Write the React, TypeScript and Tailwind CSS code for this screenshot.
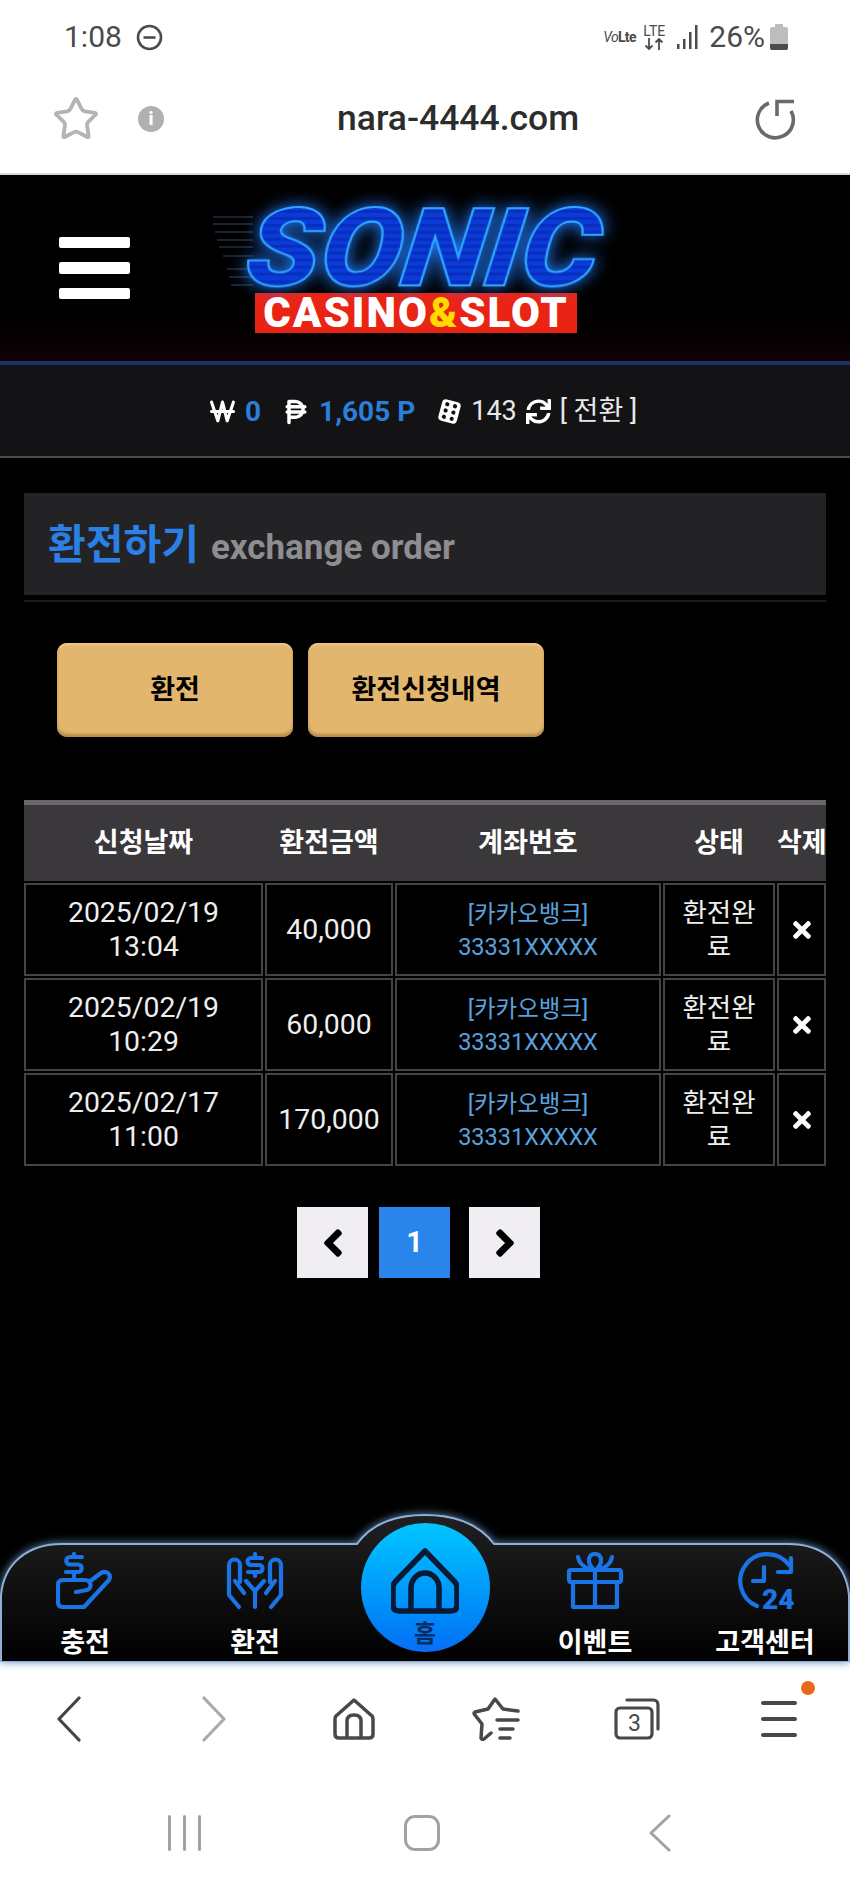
import React from "react";
import { Star } from "lucide-react";
import { FaTimes, FaAngleLeft, FaAngleRight, FaSync } from "react-icons/fa";
import { FaWonSign, FaPesoSign } from "react-icons/fa6";

const rows = [
  { date: "2025/02/19", time: "13:04", amount: "40,000" },
  { date: "2025/02/19", time: "10:29", amount: "60,000" },
  { date: "2025/02/17", time: "11:00", amount: "170,000" },
];

const tableCols = "grid grid-cols-[239px_128px_266px_112px_49px] gap-x-[2px]";
const cell = "flex items-center justify-center text-center border-2 border-[#444345] bg-black";

const StatusBar = () => (
  <div className="h-[74px] flex items-center justify-between pl-[64px] pr-[62px] text-[#4b4b4b]">
    <div className="flex items-center gap-[14px]">
      <span className="text-[30px] leading-none">1:08</span>
      <svg width="27" height="27" viewBox="0 0 27 27" fill="none" stroke="#4b4b4b" strokeWidth="2.6">
        <circle cx="13.5" cy="13.5" r="11.5" />
        <path d="M7.5 13.5h12" />
      </svg>
    </div>
    <div className="flex items-center">
      <span className="text-[14px] font-bold leading-none w-[32px] mr-[6px] tracking-tighter whitespace-nowrap">
        <i className="font-normal">Vo</i>Lte
      </span>
      <div className="flex flex-col items-center w-[26px] mr-[10px]">
        <span className="text-[14px] leading-[14px]">LTE</span>
        <svg width="20" height="12" viewBox="0 0 20 12" fill="none" stroke="#4b4b4b" strokeWidth="1.8">
          <path d="M5 0v11M1.5 7.5 5 11l3.5-3.5M15 12V1M11.5 4.500 15 1l3.500 3.500" />
        </svg>
      </div>
      <svg width="22" height="24" viewBox="0 0 22 24" fill="#4b4b4b" className="mr-[10px]">
        <rect x="0" y="19" width="2.500" height="5" />
        <rect x="6" y="14" width="2.500" height="10" />
        <rect x="12" y="7" width="2.500" height="17" />
        <rect x="18" y="0" width="2.500" height="24" />
      </svg>
      <span className="text-[30px] leading-none mr-[5px]">26%</span>
      <svg width="18" height="26" viewBox="0 0 18 26">
        <rect x="5" y="0" width="8" height="3" fill="#bdbdbd" />
        <rect x="0" y="3" width="18" height="23" rx="2" fill="#bdbdbd" />
        <path d="M0 20h18v4a2 2 0 0 1-2 2H2a2 2 0 0 1-2-2z" fill="#4b4b4b" />
      </svg>
    </div>
  </div>
);

const AddressBar = () => (
  <div className="h-[101px] grid grid-cols-[337px_auto_1fr] items-center border-b-2 border-[#d8d8d8] pb-[10px]">
    <div className="flex items-center pl-[52px] gap-[38px]">
      <Star size={48} strokeWidth={1.9} className="text-[#b4b4b4]" />
      <div className="w-[26px] h-[26px] rounded-full bg-[#b0b0b0] flex items-center justify-center text-white text-[18px] font-black leading-none">
        i
      </div>
    </div>
    <span className="text-[35.5px] font-medium text-[#2c2c2c] leading-none">nara-4444.com</span>
    <div className="flex justify-end pr-[53px]">
      <svg width="44" height="42" viewBox="0 0 44 42" fill="none" stroke="#6a6a6a" strokeWidth="3.600">
        <path d="M16 5A18 18 0 1 0 38 13" />
        <path d="M24 18V3.500H41" />
      </svg>
    </div>
  </div>
);

const SpeedLines = () => (
  <svg width="50" height="76" viewBox="0 0 50 76" stroke="#36445f" strokeWidth="1" className="absolute left-[-31px] top-[9px]">
    <path d="M0 2H40M0 9H40M2 17H40M4 25H40M6 32H40M10 41H40M14 54H40M16 62H40M18 70H40" />
  </svg>
);

const Logo = () => (
  <div className="relative w-[360px] flex flex-col items-center">
    <SpeedLines />
    <span className="scale-x-[1.13] -skew-x-[6deg] text-[108px] leading-[84px] font-black italic text-transparent bg-clip-text bg-[repeating-linear-gradient(180deg,#0a3ad8_0px,#0a3ad8_4px,#082fbc_4px,#082fbc_7px)] [-webkit-text-stroke:2px_#2fa8ff] [filter:drop-shadow(0_0_8px_#1f7bff)]">
      SONIC
    </span>
    <div className="mt-[3px] ml-[-16px] w-[322px] h-[40px] bg-[#ea2415] flex items-center justify-center text-[42px] leading-none font-black text-white tracking-[2px]">
      CASINO<span className="text-[#ffdc00]">&amp;</span>SLOT
    </div>
  </div>
);

const Header = () => (
  <div className="h-[190px] flex items-center pl-[59px] border-b-4 border-[#1c2f6e] bg-gradient-to-b from-black from-60% to-[#120205]">
    <div className="flex flex-col gap-[14px] w-[71px]">
      <div className="h-[11px] rounded-[2px] bg-white" />
      <div className="h-[12px] rounded-[2px] bg-white" />
      <div className="h-[11px] rounded-[2px] bg-white" />
    </div>
    <div className="ml-[114px] mt-[2px]">
      <Logo />
    </div>
  </div>
);

const DiceIcon = () => (
  <svg width="25" height="25" viewBox="0 0 25 25" className="mr-[9px]">
    <g transform="rotate(15 12.500 12.500)">
      <rect x="3" y="1.500" width="19" height="22" rx="4" fill="#fff" />
      <g fill="#131316">
        <circle cx="8.500" cy="6" r="2.100" />
        <circle cx="16.500" cy="6" r="2.100" />
        <circle cx="8.500" cy="12.500" r="2.100" />
        <circle cx="16.500" cy="12.500" r="2.100" />
        <circle cx="8.500" cy="19" r="2.100" />
        <circle cx="16.500" cy="19" r="2.100" />
      </g>
    </g>
  </svg>
);

const BalanceBar = () => (
  <div className="h-[93px] pt-[2px] pl-[210px] flex items-center bg-[#131316] border-b-2 border-[#4d4d4f] text-[27px] leading-none text-[#e8e8e8]">
    <FaWonSign size={25} className="text-white" />
    <span className="ml-[10px] mr-[21px] text-[28px] font-bold text-[#2a7fd8]">0</span>
    <FaPesoSign size={28} className="text-white" />
    <span className="ml-[9px] mr-[22px] text-[28px] font-bold text-[#2a7fd8]">1,605 P</span>
    <DiceIcon />
    <span>143</span>
    <FaSync size={25} className="mx-[9px] text-white" />
    <span>[ 전환 ]</span>
  </div>
);

const ExchangeButton = ({ label }: { label: string }) => (
  <button className="w-[236px] h-[94px] rounded-[10px] bg-[#e3b66e] shadow-[inset_0_-3px_3px_#b58a4a,inset_0_2px_2px_#eec98a] text-[27px] font-bold text-black">
    {label}
  </button>
);

const WithdrawTable = () => (
  <div>
    <div className={`${tableCols} h-[81px] items-center bg-[#3a383b] border-t-[5px] border-[#6a686b] text-[27px] font-bold text-white text-center`}>
      <span>신청날짜</span>
      <span>환전금액</span>
      <span>계좌번호</span>
      <span>상태</span>
      <span className="whitespace-nowrap">삭제</span>
    </div>
    <div className="mt-[2px] flex flex-col gap-y-[2px]">
      {rows.map((row) => (
        <div key={row.date + row.time} className={`${tableCols} h-[93px] text-[28.4px] leading-[34px] text-[#eeeeee]`}>
          <div className={cell}>
            <span>
              {row.date}
              <br />
              {row.time}
            </span>
          </div>
          <div className={cell}>{row.amount}</div>
          <div className={`${cell} pt-[3px] text-[23.5px] leading-[33px] text-[#5aa0dc]`}>
            <span>
              [카카오뱅크]
              <br />
              33331XXXXX
            </span>
          </div>
          <div className={`${cell} px-[8px] text-[26.5px]`}>환전완료</div>
          <div className={cell}>
            <FaTimes size={26} className="text-white" />
          </div>
        </div>
      ))}
    </div>
  </div>
);

const Pagination = () => (
  <div className="mt-[41px] ml-[273px] flex">
    <div className="w-[71px] h-[71px] bg-[#f0eef3] flex items-center justify-center text-black">
      <FaAngleLeft size={44} />
    </div>
    <div className="ml-[11px] w-[71px] h-[71px] bg-[#2a85ea] flex items-center justify-center text-white text-[29px] font-bold">
      1
    </div>
    <div className="ml-[19px] w-[71px] h-[71px] bg-[#f0eef3] flex items-center justify-center text-black">
      <FaAngleRight size={44} />
    </div>
  </div>
);

const navBlue = "#1b74e6";

const ChargeIcon = () => (
  <svg width="58" height="58" viewBox="0 0 58 58" fill="none" stroke={navBlue} strokeWidth="4.200" strokeLinecap="round" strokeLinejoin="round">
    <path d="M26 5H14a3.500 3.500 0 0 0 0 7.500h8a3.500 3.500 0 0 1 0 7.500H10M18 2v3M18 20v8" />
    <path d="M20 40l11-2c5-1 5-10-2-10H7q-5 0-5 5v17q0 5 5 5h21L53 28c3-6-3-10-8-7L33 30" />
  </svg>
);

const ExchangeIcon = () => (
  <svg width="58" height="58" viewBox="0 0 58 58" fill="none" stroke={navBlue} strokeWidth="4.200" strokeLinecap="round" strokeLinejoin="round">
    <path d="M36 6H25a3.500 3.500 0 0 0 0 7h8a3.500 3.500 0 0 1 0 7H22M29 2v4M29 20v4" />
    <path d="M13 55 3 43V13a5.500 5.500 0 0 1 11 0V30M9 29l9 12" />
    <path d="M45 55 55 43V13a5.500 5.500 0 0 0-11 0V30M49 29l-9 12" />
    <path d="M29 55V39l-9-10M29 39l9-10" />
  </svg>
);

const HomeIcon = () => (
  <svg width="68" height="66" viewBox="0 0 68 66" fill="none" stroke="#0a1a35" strokeWidth="5.500" strokeLinejoin="round">
    <path d="M34 3 5 33q-3 3-3 6v18q0 6 6 6h52q6 0 6-6V39q0-3-3-6z" />
    <path d="M20 63V40a14 15 0 0 1 28 0v23" />
  </svg>
);

const GiftIcon = () => (
  <svg width="58" height="58" viewBox="0 0 58 58" fill="none" stroke={navBlue} strokeWidth="4.200" strokeLinecap="round" strokeLinejoin="round">
    <rect x="3" y="18" width="52" height="12" rx="2" />
    <path d="M7 30v25h44V30M29 18v37" />
    <path d="M27 17c-7-8-4-15 2-15s9 7 2 15M12 5c1 6 6 10 11 12M46 5c-1 6-6 10-11 12" />
  </svg>
);

const SupportIcon = () => (
  <svg width="60" height="58" viewBox="0 0 60 58" fill="none" stroke={navBlue} strokeWidth="4.200" strokeLinecap="round" strokeLinejoin="round" className="overflow-visible">
    <path d="M54 13A27 27 0 1 0 22 54" />
    <path d="M56 6v14H43M29 15v14H18" />
    <text x="27" y="56.500" fill={navBlue} stroke="none" fontSize="28" fontWeight="900" fontFamily="Roboto">24</text>
  </svg>
);

const NavShape = () => (
  <svg width="850" height="149" viewBox="0 0 850 149" className="absolute inset-0 [filter:drop-shadow(0_0_4px_#5d8ac0)]">
    <defs>
      <linearGradient id="barFill" x1="0" y1="0" x2="0" y2="1">
        <stop offset="0" stopColor="#202022" />
        <stop offset="1" stopColor="#000" />
      </linearGradient>
    </defs>
    <path
      d="M1 149V82C4 50 28 31 62 31H357C372 10 396 2 425 2S478 10 494 31H788C822 31 846 50 849 82V149Z"
      fill="url(#barFill)"
      stroke="#8fb0d4"
      strokeWidth="2"
    />
  </svg>
);

const NavItem = ({ icon, label }: { icon: React.ReactNode; label: string }) => (
  <div className="relative flex flex-col items-center pt-[39px]">
    {icon}
    <span className="mt-[17px] text-[27px] leading-[32px] font-bold text-white whitespace-nowrap">{label}</span>
  </div>
);

const BottomNav = () => (
  <div className="relative h-[149px] grid grid-cols-5 border-b border-[#a9b4c6]">
    <NavShape />
    <NavItem icon={<ChargeIcon />} label="충전" />
    <NavItem icon={<ExchangeIcon />} label="환전" />
    <div className="relative flex justify-center pt-[10px]">
      <div className="w-[129px] h-[129px] rounded-full bg-gradient-to-b from-[#04c6ff] to-[#0a6ef5] flex flex-col items-center pt-[25px]">
        <HomeIcon />
        <span className="mt-[7px] text-[24px] leading-[26px] font-bold text-[#0a2c66]">홈</span>
      </div>
    </div>
    <NavItem icon={<GiftIcon />} label="이벤트" />
    <NavItem icon={<SupportIcon />} label="고객센터" />
  </div>
);

const BrowserToolbar = () => (
  <div className="h-[114px] grid grid-cols-6 items-center justify-items-center">
    <svg width="24" height="46" viewBox="0 0 24 46" fill="none" stroke="#444446" strokeWidth="3.200" strokeLinecap="round" strokeLinejoin="round" className="mr-[4px]">
      <path d="M22 2 2 23l20 21" />
    </svg>
    <svg width="24" height="46" viewBox="0 0 24 46" fill="none" stroke="#ababad" strokeWidth="3.200" strokeLinecap="round" strokeLinejoin="round" className="ml-[4px]">
      <path d="M2 2l20 21L2 44" />
    </svg>
    <svg width="42" height="42" viewBox="0 0 42 42" fill="none" stroke="#48484a" strokeWidth="3.500" strokeLinejoin="round">
      <path d="M21 2 3 18q-1 1-1 3v15q0 4 4 4h30q4 0 4-4V21q0-2-1-3z" />
      <path d="M14 40V23q0-6 7-6t7 6v17" />
    </svg>
    <svg width="48" height="44" viewBox="0 0 48 44" fill="none" stroke="#48484a" strokeWidth="3.500" strokeLinecap="round" strokeLinejoin="round">
      <path d="M46 14 31 12 23 2l-7 10-13 3q-2 1 0 3l7 9-1 14q1 2 3 1l7-6" />
      <path d="M25 23h21M28 32h13M28 41h10" />
    </svg>
    <div className="relative w-[46px] h-[42px]">
      <svg width="46" height="42" viewBox="0 0 46 42" fill="none" stroke="#48484a" strokeWidth="3.200" strokeLinecap="round" strokeLinejoin="round" className="absolute inset-0">
        <rect x="2" y="10" width="36" height="30" rx="4" />
        <path d="M13 2h26q5 0 5 5v24" />
      </svg>
      <span className="absolute left-[2px] top-[10px] w-[36px] h-[30px] flex items-center justify-center text-[23px] leading-none text-[#48484a]">3</span>
    </div>
    <div className="relative flex flex-col gap-[12px] w-[36px]">
      <div className="h-[4px] rounded-full bg-[#48484a]" />
      <div className="h-[4px] rounded-full bg-[#48484a]" />
      <div className="h-[4px] rounded-full bg-[#48484a]" />
      <div className="absolute right-[-18px] top-[-20px] w-[14px] h-[14px] rounded-full bg-[#e8691c]" />
    </div>
  </div>
);

const SystemNav = () => (
  <div className="h-[113px] ml-[65px] w-[714px] grid grid-cols-3 items-center justify-items-center">
    <div className="flex gap-[12px]">
      <div className="w-[3px] h-[36px] rounded-full bg-[#a2a2a4]" />
      <div className="w-[3px] h-[36px] rounded-full bg-[#a2a2a4]" />
      <div className="w-[3px] h-[36px] rounded-full bg-[#a2a2a4]" />
    </div>
    <div className="w-[36px] h-[36px] rounded-[11px] border-[3px] border-[#a2a2a4]" />
    <svg width="22" height="38" viewBox="0 0 22 38" fill="none" stroke="#a2a2a4" strokeWidth="3" strokeLinecap="round" strokeLinejoin="round">
      <path d="M20 2 2 19l18 17" />
    </svg>
  </div>
);

export default function App() {
  return (
    <div className="w-full h-[1889px] flex flex-col bg-white [font-family:Roboto,'Noto_Sans_CJK_KR',sans-serif]">
      <StatusBar />
      <AddressBar />
      <Header />
      <BalanceBar />
      <main className="flex-1 bg-black px-[24px] pt-[35px]">
        <div className="h-[102px] bg-[#232225] flex items-center pl-[24px] pt-[3px] gap-[12px]">
          <span className="text-[41px] leading-none font-bold text-[#2a80e4]">환전하기</span>
          <span className="text-[35px] leading-none font-bold text-[#8e8d92] mt-[3px]">exchange order</span>
        </div>
        <div className="mt-[5px] h-[2px] bg-[#1c1b1e]" />
        <div className="mt-[41px] ml-[33px] flex gap-[15px]">
          <ExchangeButton label="환전" />
          <ExchangeButton label="환전신청내역" />
        </div>
        <div className="mt-[63px]">
          <WithdrawTable />
        </div>
        <Pagination />
      </main>
      <div className="bg-black">
        <BottomNav />
      </div>
      <BrowserToolbar />
      <SystemNav />
    </div>
  );
}
